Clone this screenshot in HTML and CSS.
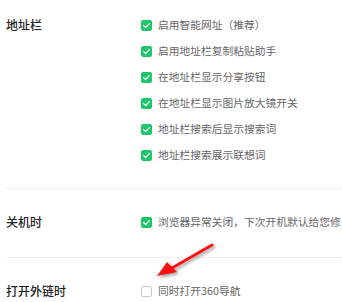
FILE: index.html
```html
<!DOCTYPE html>
<html>
<head>
<meta charset="utf-8">
<link rel="stylesheet" href="styles.css">
</head>
<body>
<div class="page">
  <div class="section s1">
    <div class="label">地址栏</div>
    <div class="options">
      <div class="row"><span class="cb on"><svg viewBox="0 0 11 11"><path d="M2.6 5.6 L4.6 7.5 L8.4 3.6"/></svg></span><span class="txt">启用智能网址（推荐）</span></div>
      <div class="row"><span class="cb on"><svg viewBox="0 0 11 11"><path d="M2.6 5.6 L4.6 7.5 L8.4 3.6"/></svg></span><span class="txt">启用地址栏复制粘贴助手</span></div>
      <div class="row"><span class="cb on"><svg viewBox="0 0 11 11"><path d="M2.6 5.6 L4.6 7.5 L8.4 3.6"/></svg></span><span class="txt">在地址栏显示分享按钮</span></div>
      <div class="row"><span class="cb on"><svg viewBox="0 0 11 11"><path d="M2.6 5.6 L4.6 7.5 L8.4 3.6"/></svg></span><span class="txt">在地址栏显示图片放大镜开关</span></div>
      <div class="row"><span class="cb on"><svg viewBox="0 0 11 11"><path d="M2.6 5.6 L4.6 7.5 L8.4 3.6"/></svg></span><span class="txt">地址栏搜索后显示搜索词</span></div>
      <div class="row"><span class="cb on"><svg viewBox="0 0 11 11"><path d="M2.6 5.6 L4.6 7.5 L8.4 3.6"/></svg></span><span class="txt">地址栏搜索展示联想词</span></div>
    </div>
  </div>
  <div class="section s2">
    <div class="label">关机时</div>
    <div class="options">
      <div class="row"><span class="cb on"><svg viewBox="0 0 11 11"><path d="M2.6 5.6 L4.6 7.5 L8.4 3.6"/></svg></span><span class="txt">浏览器异常关闭，下次开机默认给您修</span></div>
    </div>
  </div>
  <div class="section s3">
    <div class="label">打开外链时</div>
    <div class="options">
      <div class="row"><span class="cb"></span><span class="txt">同时打开360导航</span></div>
    </div>
  </div>
  <svg class="arrow" width="80" height="50" viewBox="0 0 80 50">
    <g class="arrow-g">
      <line x1="62" y1="10" x2="22" y2="33" />
      <polygon points="7,41 17,27 27,37" />
    </g>
  </svg>
</div>
</body>
</html>
```
FILE: styles.css
```css
html, body {
  margin: 0;
  padding: 0;
  background: #ffffff;
  overflow: hidden;
}
body {
  width: 342px;
  height: 302px;
  font-family: "Noto Sans CJK SC", "Noto Sans", sans-serif;
}
.page {
  position: relative;
  padding-left: 6px;
  height: 302px;
}
.section {
  display: flex;
  border-bottom: 1px solid #f1f1f1;
}
.s1 { padding-top: 12px; padding-bottom: 20px; }
.s2 { padding-top: 20px; padding-bottom: 22px; }
.s3 { padding-top: 20px; border-bottom: none; }
.label {
  width: 135px;
  flex: none;
  height: 26px;
  line-height: 26px;
  font-size: 12px;
  font-weight: 500;
  color: #222222;
}
.options {
  flex: 1;
  min-width: 0;
}
.row {
  display: flex;
  align-items: center;
  height: 26px;
  white-space: nowrap;
}
.cb {
  flex: none;
  width: 11px;
  height: 11px;
  border-radius: 2px;
  border: 1px solid #c9c9c9;
  box-sizing: border-box;
  background: #fff;
  display: flex;
  align-items: center;
  justify-content: center;
  margin-right: 6px;
}
.cb.on {
  background: #1fc66c;
  border-color: #1fc66c;
}
.cb svg {
  width: 11px;
  height: 11px;
  flex: none;
}
.cb svg path {
  fill: none;
  stroke: #ffffff;
  stroke-width: 1.2;
  stroke-linecap: round;
  stroke-linejoin: round;
}
.txt {
  font-size: 10.75px;
  color: #666666;
  line-height: 26px;
}
.arrow {
  position: absolute;
  left: 150px;
  top: 235px;
}
.arrow-g {
  filter: drop-shadow(2px 2px 1.5px rgba(0,0,0,0.35));
}
.arrow-g line {
  stroke: #ff1010;
  stroke-width: 3;
  stroke-linecap: round;
}
.arrow-g polygon {
  fill: #ff1010;
}
```
